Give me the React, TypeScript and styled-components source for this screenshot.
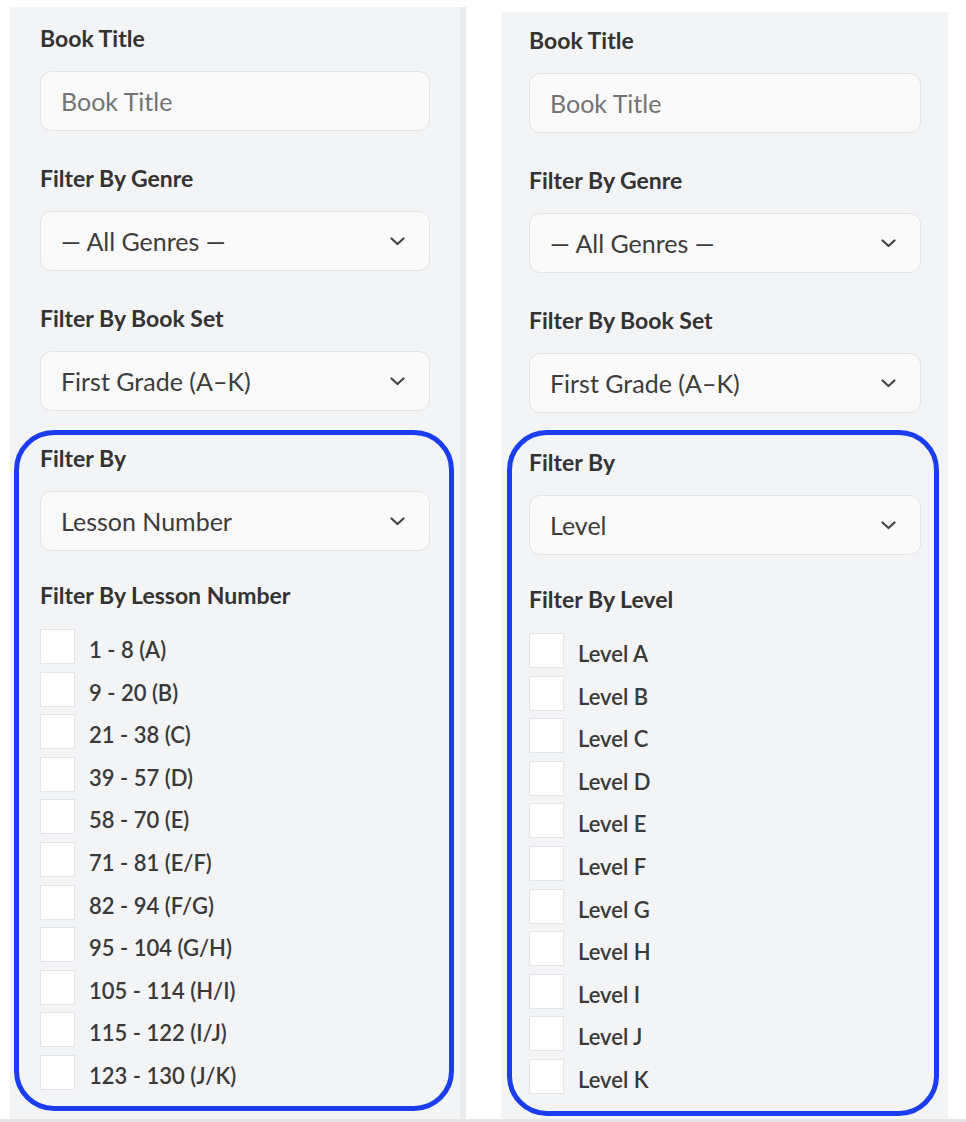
import React from 'react';
import styled, { createGlobalStyle } from 'styled-components';

const GlobalStyle = createGlobalStyle`
  html, body {
    margin: 0;
    background: #ffffff;
  }
  body {
    font-family: Lato, "Open Sans", "Liberation Sans", sans-serif;
    color: #333333;
  }
`;

const GENRES = '— All Genres —';
const BOOK_SET = 'First Grade (A–K)';

const LESSON_RANGES = [
  '1 - 8 (A)',
  '9 - 20 (B)',
  '21 - 38 (C)',
  '39 - 57 (D)',
  '58 - 70 (E)',
  '71 - 81 (E/F)',
  '82 - 94 (F/G)',
  '95 - 104 (G/H)',
  '105 - 114 (H/I)',
  '115 - 122 (I/J)',
  '123 - 130 (J/K)',
];

const LEVELS = 'ABCDEFGHIJK'.split('').map((l) => `Level ${l}`);

type Variant = 'left' | 'right';

const Chevron: React.FC = () => (
  <svg width="15" height="9" viewBox="0 0 15 9" fill="none">
    <polyline
      points="1.5,1.5 7.5,7 13.5,1.5"
      stroke="#444"
      strokeWidth="2.2"
      strokeLinecap="round"
      strokeLinejoin="round"
    />
  </svg>
);

type PanelProps = {
  filterBy: string;
  listTitle: string;
  options: string[];
  $variant: Variant;
};

const FilterPanel: React.FC<PanelProps> = ({ filterBy, listTitle, options, $variant }) => (
  <Panel $variant={$variant}>
    <Field>
      <Label>Book Title</Label>
      <TextInput placeholder="Book Title" />
    </Field>
    <Field>
      <Label>Filter By Genre</Label>
      <Select>
        <span>{GENRES}</span>
        <Chevron />
      </Select>
    </Field>
    <Field>
      <Label>Filter By Book Set</Label>
      <Select>
        <span>{BOOK_SET}</span>
        <Chevron />
      </Select>
    </Field>

    <Highlight $variant={$variant}>
      <Field>
        <Label>Filter By</Label>
        <Select>
          <span>{filterBy}</span>
          <Chevron />
        </Select>
      </Field>
      <ListTitle>{listTitle}</ListTitle>
      <CheckList>
        {options.map((opt) => (
          <CheckRow key={opt}>
            <Box />
            <OptionText>{opt}</OptionText>
          </CheckRow>
        ))}
      </CheckList>
    </Highlight>
  </Panel>
);

const App: React.FC = () => (
  <>
    <GlobalStyle />
    <Page>
      <FilterPanel
        $variant="left"
        filterBy="Lesson Number"
        listTitle="Filter By Lesson Number"
        options={LESSON_RANGES}
      />
      <FilterPanel $variant="right" filterBy="Level" listTitle="Filter By Level" options={LEVELS} />
    </Page>
  </>
);

const Page = styled.div`
  display: flex;
  align-items: stretch;
  height: 1122px;
  box-sizing: border-box;
  border-bottom: 3px solid #e4e4e4;
  overflow: hidden;
`;

const Panel = styled.aside<{ $variant: Variant }>`
  box-sizing: border-box;
  display: flex;
  flex-direction: column;
  background: #f3f4f6;
  ${({ $variant }) =>
    $variant === 'left'
      ? `
    width: 456px;
    margin: 7px 0 0 10px;
    padding: 18px 30px 0 30px;
    border-right: 6px solid #eaebed;
  `
      : `
    width: 447px;
    margin: 12px 0 0 35px;
    padding: 15px 27px 0 28px;
  `}
`;

const Field = styled.div`
  display: flex;
  flex-direction: column;
  margin-bottom: 34px;
`;

const Label = styled.label`
  font-size: 23px;
  line-height: 27px;
  font-weight: 700;
  color: #333;
  margin-bottom: 19px;
`;

const controlBase = `
  box-sizing: border-box;
  height: 60px;
  width: 100%;
  border: 1px solid #e2e4e7;
  border-radius: 11px;
  background: #fafafa;
  padding: 0 20px;
  font-family: Lato, "Open Sans", "Liberation Sans", sans-serif;
  font-size: 25px;
`;

const TextInput = styled.input`
  ${controlBase}
  color: #333;
  outline: none;

  &::placeholder {
    color: #747474;
  }
`;

const Select = styled.div`
  ${controlBase}
  display: flex;
  align-items: center;
  justify-content: space-between;
  padding-right: 24px;
  color: #3c3c3c;
`;

const Highlight = styled.section<{ $variant: Variant }>`
  border: 5px solid #1b3df0;
  border-radius: 40px;
  padding: 10px 19px 16px 21px;
  margin: -15px -24px 0 -26px;
  ${({ $variant }) =>
    $variant === 'right' &&
    `
    margin: -17px -18px 0 -22px;
    padding: 14px 13px 17px 17px;
  `}

  ${Field} {
    margin-bottom: 31px;
  }
`;

const ListTitle = styled.div`
  font-size: 23px;
  line-height: 27px;
  font-weight: 700;
  color: #333;
  margin-bottom: 20px;
`;

const CheckList = styled.div`
  display: flex;
  flex-direction: column;
  gap: 7.6px;
`;

const CheckRow = styled.label`
  display: flex;
  align-items: center;
  gap: 14px;
  font-size: 22px;
  font-weight: 600;
  color: #3a3a3a;
`;

const OptionText = styled.span`
  padding-top: 6px;
`;

const Box = styled.span`
  box-sizing: border-box;
  width: 35px;
  height: 35px;
  background: #fff;
  border: 1px solid #e3e5e8;
  flex-shrink: 0;
`;

export default App;
